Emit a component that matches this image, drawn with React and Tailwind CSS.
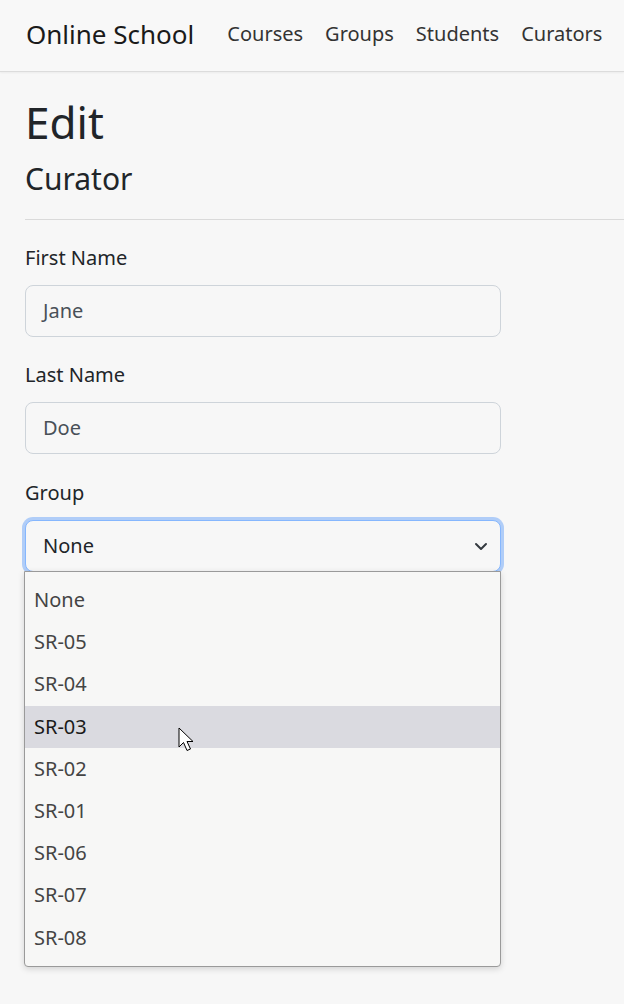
import React from "react";

const font = { fontFamily: '"Noto Sans", "Open Sans", sans-serif' };

function Field({ label, value, first }) {
  return (
    <div className={first ? "mt-[16px]" : "mt-[23px]"}>
      <div className="text-[20px] leading-[30px] text-[#212529]">{label}</div>
      <div className="mt-[12px] h-[52px] w-[476px] rounded-[8px] border border-[#ced4da] bg-[#f7f7f7] pl-[17px] flex items-center text-[20px] text-[#495057]">
        {value}
      </div>
    </div>
  );
}

export default function App() {
  const items = ["None", "SR-05", "SR-04", "SR-03", "SR-02", "SR-01", "SR-06", "SR-07", "SR-08"];
  return (
    <div className="relative min-h-[1004px] w-[624px] overflow-hidden bg-[#f7f7f7]" style={font}>
      <nav className="h-[72px] border-b border-[#dcdcdc] bg-[#f8f8f8] shadow-[0_1px_2px_rgba(0,0,0,0.05)] flex items-center pl-[26px] pb-[3px]">
        <span className="text-[26px] text-[#1a1a1a] mr-[33px]">Online School</span>
        <div className="flex gap-[22px] text-[20px] text-[#333]">
          <span>Courses</span>
          <span>Groups</span>
          <span>Students</span>
          <span>Curators</span>
        </div>
      </nav>
      <main className="pl-[25px]">
        <h1 className="mt-[22px] text-[44px] leading-[56px] text-[#212529]">Edit</h1>
        <h2 className="mt-[9px] text-[30px] leading-[40px] text-[#212529]">Curator</h2>
        <hr className="mt-[20px] border-0 border-t border-[#dadada]" />
        <div className="pt-[7px]">
          <Field label="First Name" value="Jane" first />
          <Field label="Last Name" value="Doe" />
          <div className="mt-[24px] relative">
            <div className="text-[20px] leading-[30px] text-[#212529]">Group</div>
            <div className="mt-[12px] h-[52px] w-[476px] rounded-[8px] border border-[#86b7fe] bg-[#f7f7f7] pl-[17px] pr-[12px] flex items-center justify-between text-[20px] text-[#212529] shadow-[0_0_0_3px_rgba(13,110,253,0.3)]">
              <span>None</span>
              <svg width="14" height="10" viewBox="0 0 14 10" fill="none">
                <path d="M2 3l5 5 5-5" stroke="#343a40" strokeWidth="2" strokeLinecap="round" strokeLinejoin="round" />
              </svg>
            </div>
            <div className="absolute left-[-1px] top-[93px] w-[477px] rounded-b-[4px] border border-[#9a9a9a] bg-[#f7f7f6] py-[7px] shadow-[0_2px_6px_rgba(0,0,0,0.15)] z-10">
              {items.map((it) => (
                <div
                  key={it}
                  className={
                    "h-[42.2px] flex items-center pl-[9px] text-[20px] " +
                    (it === "SR-03" ? "bg-[#dadae0] text-[#1a1a1a]" : "text-[#444]")
                  }
                >
                  {it}
                </div>
              ))}
            </div>
          </div>
        </div>
      </main>
      <svg className="absolute left-[178px] top-[727px] z-20" width="18" height="27" viewBox="0 0 18 27">
        <path d="M1 1 L1 20 L5.5 15.5 L9 23.5 L12.5 22 L9 14.5 L15 14.5 Z" fill="#fff" stroke="#000" strokeWidth="1" strokeLinejoin="round" />
      </svg>
    </div>
  );
}
